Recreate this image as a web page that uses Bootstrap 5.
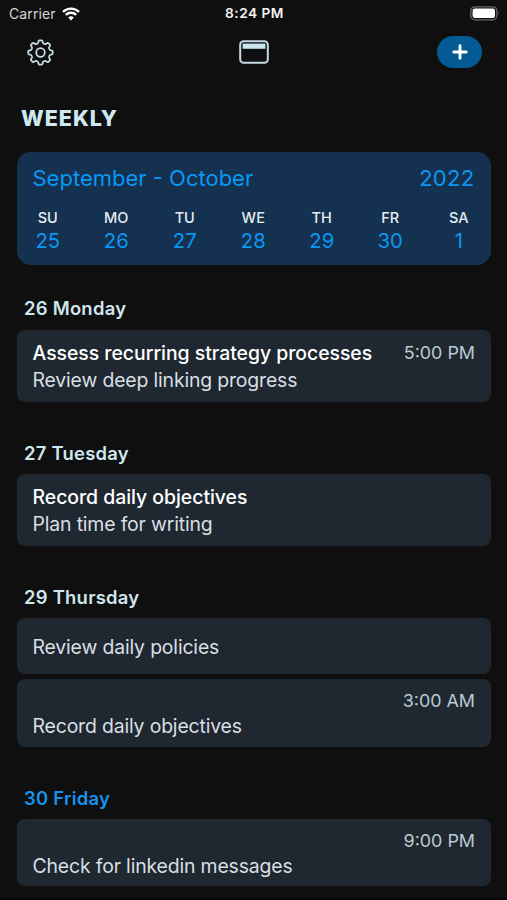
<!DOCTYPE html>
<html lang="en">
<head>
<meta charset="utf-8">
<meta name="viewport" content="width=device-width, initial-scale=1">
<title>Weekly</title>
<link href="https://cdn.jsdelivr.net/npm/bootstrap@5.3.0/dist/css/bootstrap.min.css" rel="stylesheet">
<style>
  body { background: #0f0f0f; color: #d9dfe3; font-family: Inter, "Liberation Sans", sans-serif; height: 900px; overflow: hidden; border-bottom: 2px solid #030303; }
  .status { height: 27px; padding: 0 7px 0 9px; font-size: 14px; color: #d4d6d8; }
  .status .carrier { letter-spacing: .1px; }
  .status .clock { font-weight: 600; color: #f4f4f4; font-size: 13.7px; letter-spacing: .5px; }
  .wifi { margin-left: 6px; }
  .tools { height: 50px; padding: 0 25px 0 26px; }
  .side { flex: 1 1 0; }
  .add-btn { width: 45px; height: 32px; background: #045a94; border: 0; }
  .page-title { font-size: 21.5px; font-weight: 800; color: #cfe9f2; line-height: 26px; margin: 27.5px 0 21px 21px; letter-spacing: 1px; }
  .pane { margin: 0 16px 0 17px; }
  .week { height: 113px; background: #14314f; border-radius: 14px; padding: 12px 16px 0 15.5px; color: #0b97f3; }
  .months { font-size: 22px; line-height: 28px; }
  .year { letter-spacing: .3px; margin-right: .5px; }
  .days { margin: 16px -18px 0 -19px; }
  .days > div { flex: 1 1 0; }
  .dow { font-size: 14.5px; font-weight: 500; color: #e6ebf0; line-height: 20px; }
  .num { font-size: 20.3px; line-height: 26px; }
  .day-title { height: 72px; padding: 30px 0 0 7px; font-size: 18.4px; line-height: 42px; font-weight: 600; color: #cfe6ee; margin: 0; letter-spacing: .27px; }
  .today { color: #1594ee; }
  .first { height: 65px; padding-top: 22.5px; }
  .task { background: #1f2831; border-radius: 8px; padding: 0 16px 0 15.5px; }
  .two { height: 72px; padding-top: 9px; }
  .one { height: 56px; padding-top: 16px; }
  .timed { height: 67.5px; padding-top: 9px; }
  .late { margin-top: 5.5px; }
  .name { font-size: 19.4px; font-weight: 500; line-height: 28px; color: #fff; }
  .name > span:first-child { letter-spacing: -.02px; }
  .note { font-size: 19.4px; line-height: 27px; letter-spacing: -.15px; }
  .time { font-size: 17.9px; color: #bccad2; }
  .timed .time { line-height: 25px; }
</style>
</head>
<body>
<div class="status d-flex align-items-center">
  <div class="side d-flex align-items-center"><span class="carrier">Carrier</span>
    <svg class="wifi" width="18" height="14" viewBox="0 0 18 14" fill="none" stroke="#fff" stroke-width="2.3"><path d="M1 4.9a11.4 11.4 0 0 1 16 0M3.8 7.9a7.4 7.4 0 0 1 10.4 0"/><path d="M9 13.5 6.2 10.6a4 4 0 0 1 5.6 0z" fill="#fff" stroke="none"/></svg>
  </div>
  <span class="clock">8:24 PM</span>
  <div class="side d-flex justify-content-end">
    <svg width="30" height="15" viewBox="0 0 30 15"><rect x=".8" y=".8" width="26" height="13" rx="4" fill="none" stroke="#68696b" stroke-width="1.3"/><rect x="2.6" y="2.6" width="22.4" height="9.4" rx="2.2" fill="#fff"/><path d="M28.2 5.2q1.6 2.1 0 4.2z" fill="#68696b"/></svg>
  </div>
</div>
<div class="tools d-flex align-items-center">
  <div class="side">
    <svg class="d-block" width="29" height="29" viewBox="-14.5 -14.5 29 29" fill="none" stroke="#c3dbe3" stroke-width="1.8" stroke-linejoin="round">
      <defs><path id="tooth" d="M-3.6-8.7Q-2.4-9.2-2.2-10.3L-1.9-11.5Q-1.7-12.2-1.1-12.2H1.1Q1.7-12.2 1.9-11.5L2.2-10.3Q2.4-9.2 3.6-8.7"/></defs>
      <use href="#tooth"/><use href="#tooth" transform="rotate(45)"/><use href="#tooth" transform="rotate(90)"/><use href="#tooth" transform="rotate(135)"/><use href="#tooth" transform="rotate(180)"/><use href="#tooth" transform="rotate(225)"/><use href="#tooth" transform="rotate(270)"/><use href="#tooth" transform="rotate(315)"/>
      <circle r="4.3"/>
    </svg>
  </div>
  <svg width="30" height="24" viewBox="0 0 30 24"><rect x="1.2" y="1.2" width="27.6" height="21.6" rx="3.4" fill="none" stroke="#c3dbe3" stroke-width="2"/><path d="M3.6 3.6h22.8v5.2H3.6z" fill="#c9e6ef"/></svg>
  <div class="side d-flex justify-content-end">
    <button class="add-btn btn rounded-pill p-0 d-flex align-items-center justify-content-center" aria-label="Add">
      <svg width="16" height="16" viewBox="0 0 16 16" stroke="#fff" stroke-width="2.9" stroke-linecap="round"><path d="M8 1.8v12.4M1.8 8h12.4"/></svg>
    </button>
  </div>
</div>
<h1 class="page-title"><span>WEEKLY</span></h1>
<main class="pane">
  <section class="week">
    <div class="months d-flex justify-content-between"><span>September - October</span><span class="year">2022</span></div>
    <div class="days d-flex text-center">
      <div><div class="dow">SU</div><div class="num">25</div></div>
      <div><div class="dow">MO</div><div class="num">26</div></div>
      <div><div class="dow">TU</div><div class="num">27</div></div>
      <div><div class="dow">WE</div><div class="num">28</div></div>
      <div><div class="dow">TH</div><div class="num">29</div></div>
      <div><div class="dow">FR</div><div class="num">30</div></div>
      <div><div class="dow">SA</div><div class="num">1</div></div>
    </div>
  </section>
  <h2 class="day-title first"><span>26 Monday</span></h2>
  <div class="task two">
    <div class="name d-flex justify-content-between"><span>Assess recurring strategy processes</span><span class="time fw-normal">5:00 PM</span></div>
    <div class="note"><span>Review deep linking progress</span></div>
  </div>
  <h2 class="day-title"><span>27 Tuesday</span></h2>
  <div class="task two">
    <div class="name"><span>Record daily objectives</span></div>
    <div class="note"><span>Plan time for writing</span></div>
  </div>
  <h2 class="day-title"><span>29 Thursday</span></h2>
  <div class="task one"><div class="note"><span>Review daily policies</span></div></div>
  <div class="task timed late">
    <div class="time text-end"><span>3:00 AM</span></div>
    <div class="note"><span>Record daily objectives</span></div>
  </div>
  <h2 class="day-title today"><span>30 Friday</span></h2>
  <div class="task timed">
    <div class="time text-end"><span>9:00 PM</span></div>
    <div class="note"><span>Check for linkedin messages</span></div>
  </div>
</main>
</body>
</html>
